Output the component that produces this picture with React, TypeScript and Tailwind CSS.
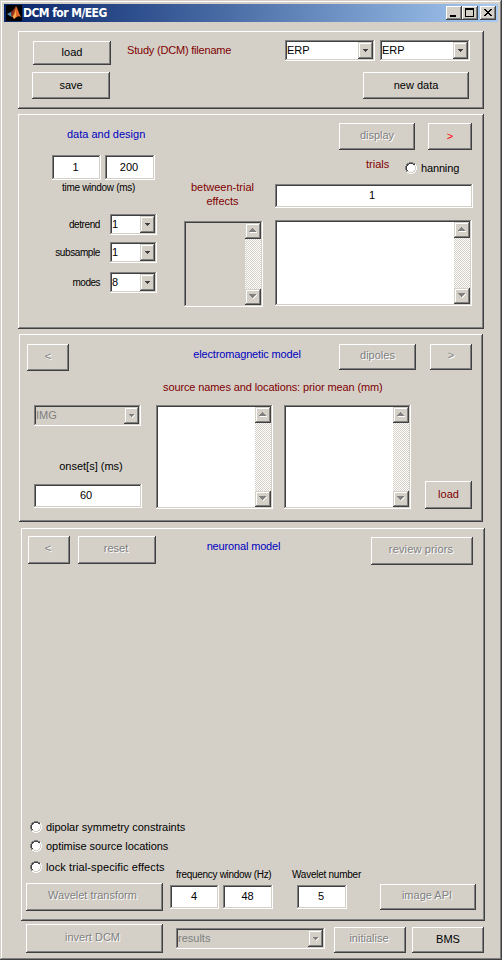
import React from "react";

const RAISED =
  "bg-[#d4d0c8] shadow-[inset_-1px_-1px_0_#404040,inset_1px_1px_0_#fff,inset_-2px_-2px_0_#808080]";
const SUNKEN =
  "shadow-[inset_-1px_-1px_0_#fff,inset_1px_1px_0_#808080,inset_-2px_-2px_0_#d4d0c8,inset_2px_2px_0_#404040]";
const SMALL_RAISED =
  "bg-[#d4d0c8] shadow-[inset_-1px_-1px_0_#404040,inset_1px_1px_0_#d4d0c8,inset_-2px_-2px_0_#808080,inset_2px_2px_0_#fff]";
const DISABLED = "pb-[3px] text-[#808080] [text-shadow:1px_1px_0_#fff]";

type BoxProps = { className?: string; children?: React.ReactNode };

function Panel({ className = "", children }: BoxProps) {
  return <section className={`shrink-0 ${RAISED} ${className}`}>{children}</section>;
}

function Button({ className = "", disabled = false, children }: BoxProps & { disabled?: boolean }) {
  return (
    <button
      disabled={disabled}
      className={`flex shrink-0 items-center justify-center whitespace-nowrap ${RAISED} ${disabled ? DISABLED : "pb-px"} ${className}`}
    >
      {children}
    </button>
  );
}

function Label({ className = "", children }: BoxProps) {
  return <div className={`shrink-0 whitespace-nowrap leading-[14px] ${className}`}>{children}</div>;
}

function Field({ className = "", children }: BoxProps) {
  return (
    <div className={`flex shrink-0 items-center justify-center bg-white pb-px ${SUNKEN} ${className}`}>{children}</div>
  );
}

function Select({ className = "", disabled = false, children }: BoxProps & { disabled?: boolean }) {
  return (
    <div
      className={`flex h-[21px] shrink-0 items-stretch p-[2px] ${SUNKEN} ${disabled ? "bg-[#d4d0c8] text-[#808080]" : "bg-white"} ${className}`}
    >
      <span className="flex-1 leading-[16px]">{children}</span>
      <span className={`flex w-[15px] items-center justify-center ${SMALL_RAISED}`}>
        <svg width="6" height="4" viewBox="0 0 6 4" shapeRendering="crispEdges">
          {disabled && <path d="M5 1h1v1h-1v1h-1v1h-1v-1h1v-1h1z" fill="#fff" />}
          <path d="M0 0h5v1h-1v1h-1v1h-1v-1h-1v-1h-1z" fill={disabled ? "#808080" : "#404040"} />
        </svg>
      </span>
    </div>
  );
}

function ScrollButton({ down = false }: { down?: boolean }) {
  return (
    <span className={`flex h-4 w-4 items-center justify-center ${SMALL_RAISED}`}>
      <svg width="8" height="6" viewBox="0 0 8 6" shapeRendering="crispEdges">
        {down ? (
          <>
            <path d="M7 1h1v1h-1v1h-1v1h-1v1h-1v-1h1v-1h1v-1h1z" fill="#fff" />
            <path d="M0 0h7v1h-1v1h-1v1h-1v1h-1v-1h-1v-1h-1v-1h-1z" fill="#808080" />
          </>
        ) : (
          <>
            <path d="M1 5h7v-1h-7z" fill="#fff" />
            <path d="M3 0h1v1h1v1h1v1h1v1h-7v-1h1v-1h1v-1h1z" fill="#808080" />
          </>
        )}
      </svg>
    </span>
  );
}

function ListBox({ className = "" }: { className?: string }) {
  return (
    <div className={`flex shrink-0 justify-end p-[2px] ${SUNKEN} ${className}`}>
      <div className="flex w-4 flex-col justify-between bg-[repeating-conic-gradient(#fff_0%_25%,#d4d0c8_0%_50%)] bg-[length:2px_2px]">
        <ScrollButton />
        <ScrollButton down />
      </div>
    </div>
  );
}

function Radio({ className = "", children }: BoxProps) {
  return (
    <label className={`flex h-[14px] shrink-0 items-center whitespace-nowrap leading-[14px] ${className}`}>
      <svg width="12" height="12" viewBox="0 0 12 12" className="mr-1 shrink-0" shapeRendering="crispEdges">
        <path d="M4 2h4v1h1v1h1v4h-1v1h-1v1h-4v-1h-1v-1h-1v-4h1v-1h1z" fill="#fff" />
        <path d="M4 0h4v1h-4zM2 1h2v1h-2zM8 1h2v1h-2zM1 2h1v2h-1zM0 4h1v4h-1zM1 8h1v2h-1z" fill="#808080" />
        <path d="M4 1h4v1h-4zM2 2h2v1h-2zM8 2h2v1h-2zM2 3h1v1h-1zM1 4h1v4h-1zM2 8h1v1h-1z" fill="#404040" />
        <path d="M10 2h1v2h-1zM11 4h1v4h-1zM10 8h1v2h-1zM8 10h2v1h-2zM4 11h4v1h-4zM2 10h2v1h-2z" fill="#fff" />
      </svg>
      {children}
    </label>
  );
}

function TitleBar() {
  return (
    <header className="flex h-[18px] shrink-0 items-center bg-linear-to-r from-[#0a246a] to-[#a6caf0] px-[2px]">
      <svg width="16" height="16" viewBox="0 0 16 16">
        <rect width="16" height="16" fill="#000" />
        <path d="M1 9l4-2 2-1 2 3-3 3-2-1z" fill="#4a8fb0" />
        <path d="M5 7l3-3 2-3-1 7-3 4-1-2z" fill="#8c3020" />
        <path d="M10 1c2 3 3 8 5 11-2-1-3-1-4 0l-3 2c0-2-1-2-2-2 2-2 3-7 4-11z" fill="#e0672a" />
        <path d="M10 2c0 4-1 7-3 10l1 2 2-3z" fill="#f8b34a" />
      </svg>
      <span className="ml-px flex-1 whitespace-nowrap font-['DejaVu_Sans_Condensed','DejaVu_Sans',sans-serif] text-[12px] font-bold leading-[18px] tracking-[-0.55px] text-white [font-stretch:condensed]">
        DCM for M/EEG
      </span>
      <span className={`h-[14px] w-4 ${RAISED}`}>
        <svg width="16" height="14" shapeRendering="crispEdges">
          <rect x="4" y="9" width="6" height="2" />
        </svg>
      </span>
      <span className={`h-[14px] w-4 ${RAISED}`}>
        <svg width="16" height="14" shapeRendering="crispEdges">
          <path d="M3 2h9v9h-9zM4 4v6h7v-6z" fillRule="evenodd" />
        </svg>
      </span>
      <span className={`ml-[2px] h-[14px] w-4 ${RAISED}`}>
        <svg width="16" height="14" shapeRendering="crispEdges">
          <path d="M4 3h2v1h1v1h2v-1h1v-1h2v1h-1v1h-1v1h-1v1h1v1h1v1h1v1h-2v-1h-1v-1h-2v1h-1v1h-2v-1h1v-1h1v-1h1v-1h-1v-1h-1v-1h-1z" />
        </svg>
      </span>
    </header>
  );
}

export default function App() {
  return (
    <main className="flex h-[960px] w-[502px] flex-col bg-[#d4d0c8] p-1 font-['Liberation_Sans',Arial,sans-serif] text-[11px] text-black shadow-[inset_-1px_-1px_0_#404040,inset_1px_1px_0_#d4d0c8,inset_-2px_-2px_0_#808080,inset_2px_2px_0_#fff]">
      <TitleBar />

      <Panel className="mt-[9px] ml-[14px] h-[78px] w-[466px]">
        <div className="flex h-[41px] items-start pt-[9px]">
          <Button className="mt-px ml-[15px] h-6 w-[78px]">load</Button>
          <Label className="mt-[3px] ml-4 w-[158px] tracking-[-0.2px] text-[#800000]">Study (DCM) filename</Label>
          <Select className="w-[90px]">ERP</Select>
          <Select className="ml-[5px] w-[90px]">ERP</Select>
        </div>
        <div className="flex justify-between pr-[15px] pl-[14px]">
          <Button className="h-[27px] w-[78px]">save</Button>
          <Button className="h-[27px] w-[106px]">new data</Button>
        </div>
      </Panel>

      <Panel className="mt-[5px] ml-[14px] flex h-[215px] w-[466px]">
        <div className="flex w-[166px] flex-col">
          <Label className="mt-[13px] ml-[49px] w-[78px] text-center text-[#0000c0]">data and design</Label>
          <div className="mt-[14px] ml-[34px] flex gap-1">
            <Field className="h-[25px] w-[49px] pr-[2px]">1</Field>
            <Field className="h-[25px] w-[50px] pr-[2px]">200</Field>
          </div>
          <Label className="mt-px ml-10 w-[81px] text-center text-[10px] tracking-[-0.3px]">time window (ms)</Label>
          <div className="mt-[19px] flex items-center">
            <Label className="mr-[10px] w-[82px] text-right text-[10px] tracking-[-0.4px]">detrend</Label>
            <Select className="w-[47px]">1</Select>
          </div>
          <div className="mt-[7px] flex items-center">
            <Label className="mr-[10px] w-[82px] text-right text-[10px] tracking-[-0.4px]">subsample</Label>
            <Select className="w-[47px]">1</Select>
          </div>
          <div className="mt-[9px] flex items-center">
            <Label className="mr-[10px] w-[82px] text-right text-[10px] tracking-[-0.5px]">modes</Label>
            <Select className="w-[47px]">8</Select>
          </div>
        </div>

        <div className="flex w-[91px] flex-col">
          <Label className="mt-[66px] w-[77px] text-center text-[#800000]">
            between-trial
            <br />
            effects
          </Label>
          <ListBox className="mt-[13px] h-[86px] w-[79px]" />
        </div>

        <div className="flex flex-col">
          <div className="mt-[9px] ml-16 flex gap-[13px]">
            <Button disabled className="h-[27px] w-[76px]">display</Button>
            <Button className="h-[27px] w-[44px] text-[#ff0000]">&gt;</Button>
          </div>
          <div className="mt-[7px] ml-[91px] flex h-[27px] items-start">
            <Label className="w-[39px] text-[#800000]">trials</Label>
            <Radio className="mt-1 tracking-[-0.15px]">hanning</Radio>
          </div>
          <Field className="h-6 w-[198px] pr-1">1</Field>
          <ListBox className="mt-3 h-[86px] w-[197px] bg-white" />
        </div>
      </Panel>

      <Panel className="mt-[5px] ml-[15px] flex h-[188px] w-[464px] flex-col">
        <div className="mt-[10px] flex h-[27px] items-start">
          <Button disabled className="ml-2 h-[27px] w-[42px]">&lt;</Button>
          <Label className="mt-[3px] ml-[86px] w-[184px] text-center tracking-[-0.15px] text-[#0000c0]">
            electromagnetic model
          </Label>
          <Button disabled className="h-[26px] w-[77px]">dipoles</Button>
          <Button disabled className="ml-[14px] h-[26px] w-[42px]">&gt;</Button>
        </div>
        <Label className="mt-[9px] ml-[144px] w-[219px] tracking-[-0.11px] text-[#800000]">
          source names and locations: prior mean (mm)
        </Label>
        <div className="mt-[11px] flex h-[104px]">
          <div className="ml-[15px] flex w-[122px] flex-col">
            <Select disabled className="w-[107px]">IMG</Select>
            <Label className="mt-[33px] w-[114px] text-center">onset[s] (ms)</Label>
            <Field className="mt-[11px] h-6 w-[108px] pr-1">60</Field>
          </div>
          <ListBox className="w-[117px] bg-white" />
          <ListBox className="ml-[11px] w-[127px] bg-white" />
          <Button className="mt-auto ml-[14px] h-7 w-[47px] text-[#800000]">load</Button>
        </div>
      </Panel>

      <Panel className="mt-[6px] ml-[17px] flex h-[393px] w-[464px] flex-col pb-[10px]">
        <div className="mt-2 flex h-[29px] items-start">
          <Button disabled className="ml-[7px] h-7 w-[42px] pr-[2px]">&lt;</Button>
          <Button disabled className="ml-2 h-7 w-[78px] pr-[2px]">reset</Button>
          <Label className="mt-[3px] ml-5 w-[135px] text-center tracking-[-0.15px] text-[#0000c0]">neuronal model</Label>
          <Button disabled className="mt-px ml-[60px] h-7 w-[102px] pr-[2px] tracking-[0.15px]">review priors</Button>
        </div>
        <div className="mt-auto flex items-end">
          <div className="ml-[5px] flex w-[144px] flex-col">
            <Radio className="ml-1 tracking-[-0.03px]">dipolar symmetry constraints</Radio>
            <Radio className="mt-[5px] ml-1 tracking-[-0.05px]">optimise source locations</Radio>
            <Radio className="mt-[7px] ml-1 tracking-[0.1px]">lock trial-specific effects</Radio>
            <Button disabled className="mt-[9px] h-7 w-[137px] pr-1">Wavelet transform</Button>
          </div>
          <div className="mb-[2px] flex w-[103px] flex-col">
            <Label className="pl-[6px] text-[10px] tracking-[-0.3px]">frequency window (Hz)</Label>
            <div className="mt-[3px] flex gap-1">
              <Field className="h-6 w-[49px] pr-px">4</Field>
              <Field className="h-6 w-[50px] pr-px">48</Field>
            </div>
          </div>
          <div className="mb-[2px] ml-[17px] flex w-[73px] flex-col">
            <Label className="text-center text-[10px] tracking-[-0.25px]">Wavelet number</Label>
            <Field className="mt-[3px] ml-[7px] h-6 w-[50px] pr-[2px]">5</Field>
          </div>
          <Button disabled className="mb-px ml-[17px] h-[26px] w-[96px] pr-[2px]">image API</Button>
        </div>
      </Panel>

      <div className="mt-[3px] flex items-end pl-[22px]">
        <Button disabled className="h-[29px] w-[137px] pr-1">invert DCM</Button>
        <Select disabled className="mb-1 ml-[13px] w-[149px]">results</Select>
        <Button disabled className="ml-[9px] h-[26px] w-[72px] pr-[2px]">initialise</Button>
        <Button className="ml-[6px] h-[26px] w-[72px]">BMS</Button>
      </div>
    </main>
  );
}
